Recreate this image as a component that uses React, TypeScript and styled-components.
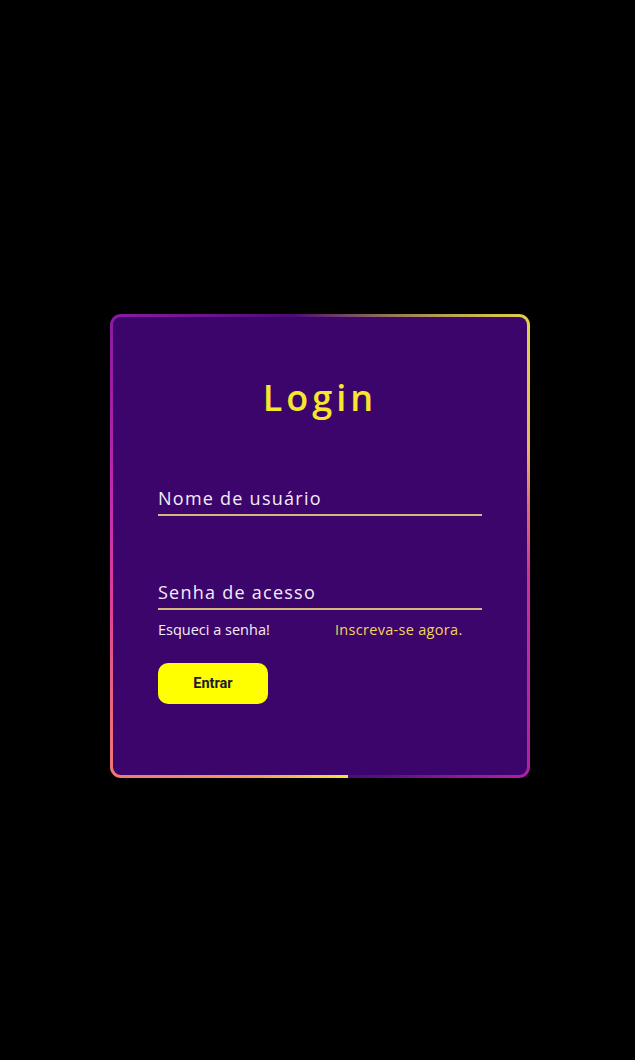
import React from "react";
import styled, { createGlobalStyle } from "styled-components";

const Global = createGlobalStyle`
  html, body { margin: 0; padding: 0; background: #000; }
  body { font-family: "Open Sans", "Noto Sans", sans-serif; }
  #root { min-height: 1060px; }
`;

const Page = styled.main`
  width: 635px;
  height: 1060px;
  box-sizing: border-box;
  padding-left: 5px;
  display: flex;
  align-items: center;
  justify-content: center;
  background: #000;
`;

const Frame = styled.div`
  width: 420px;
  height: 464px;
  box-sizing: border-box;
  padding: 3px;
  border-radius: 11px;
  margin-top: 32px;
  background: conic-gradient(
    from 173deg at 50% 50%,
    #f6e33c 0deg,
    #f0a060 22deg,
    #f07a72 49deg,
    #e0409a 80deg,
    #c42ab0 110deg,
    #8c1aa2 145deg,
    #4a0c78 180deg,
    #9a7a58 205deg,
    #e2d046 229deg,
    #e8b860 252deg,
    #e07070 266deg,
    #d2309c 285deg,
    #b020a6 325deg,
    #5c1088 350deg,
    #4a0c78 360deg
  );
`;

const Card = styled.form`
  height: 100%;
  box-sizing: border-box;
  border-radius: 8px;
  background: #3c056c;
  padding: 56px 45px 0;
  display: flex;
  flex-direction: column;
`;

const Title = styled.h1`
  margin: 0 0 62px;
  text-align: center;
  font-family: "Open Sans", sans-serif;
  font-weight: 600;
  font-size: 36px;
  line-height: 50px;
  letter-spacing: 4px;
  color: #f7e52e;
`;

const Field = styled.label<{ $gap: number }>`
  display: block;
  margin-bottom: ${(p) => p.$gap}px;
  border-bottom: 2px solid #d6b87c;
  padding-bottom: 3px;
`;

const FieldText = styled.span`
  display: block;
  font-family: "Open Sans", sans-serif;
  font-size: 18px;
  line-height: 26px;
  letter-spacing: 1.25px;
  color: #f4ecf8;
`;

const Links = styled.div`
  display: flex;
  margin-top: 10px;
  font-family: "Open Sans", sans-serif;
  font-size: 14.5px;
  line-height: 20px;
`;

const LinkText = styled.a<{ $accent?: boolean }>`
  color: ${(p) => (p.$accent ? "#f3d35c" : "#f4ecf8")};
  text-decoration: none;
  width: ${(p) => (p.$accent ? "auto" : "177px")};
  letter-spacing: ${(p) => (p.$accent ? "0.3px" : "0px")};
`;

const Button = styled.button`
  margin-top: 23px;
  width: 110px;
  height: 41px;
  border: none;
  border-radius: 10px;
  background: #ffff00;
  color: #1e1830;
  font-family: Roboto, sans-serif;
  font-weight: 700;
  font-size: 14.5px;
`;

export default function App() {
  return (
    <>
      <Global />
      <Page>
        <Frame>
          <Card onSubmit={(e) => e.preventDefault()}>
            <Title>Login</Title>
            <Field $gap={63}>
              <FieldText>Nome de usuário</FieldText>
            </Field>
            <Field $gap={0}>
              <FieldText>Senha de acesso</FieldText>
            </Field>
            <Links>
              <LinkText href="#">Esqueci a senha!</LinkText>
              <LinkText href="#" $accent>
                Inscreva-se agora.
              </LinkText>
            </Links>
            <Button type="submit">Entrar</Button>
          </Card>
        </Frame>
      </Page>
    </>
  );
}
